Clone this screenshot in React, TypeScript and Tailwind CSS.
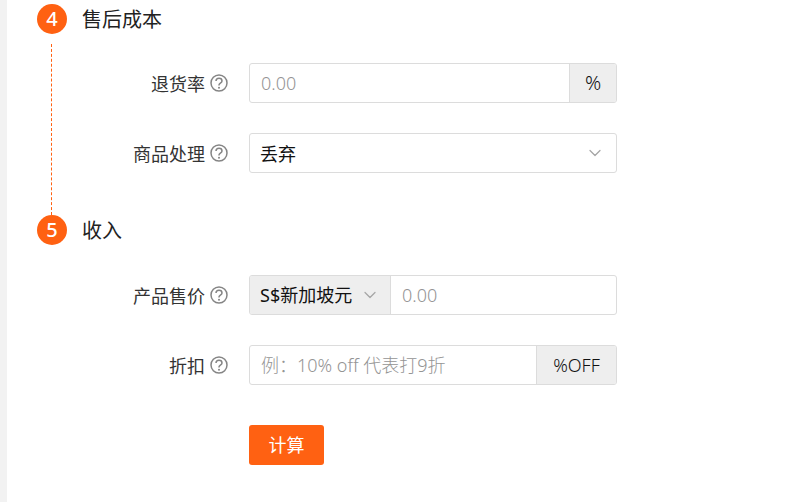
import { ChevronDown } from 'lucide-react'
import type { ReactNode } from 'react'

function HelpIcon() {
  return (
    <svg viewBox="0 0 18 18" className="h-[18px] w-[18px] shrink-0" fill="none">
      <circle cx="9" cy="9" r="8" stroke="#858585" strokeWidth="1.5" />
      <path
        d="M6 7.1c0-1.7 1.3-2.8 3-2.8s3 1 3 2.6c0 1.2-.8 1.8-1.6 2.3-.9.6-1.4 1-1.4 1.9v.4"
        stroke="#858585"
        strokeWidth="1.5"
      />
      <circle cx="9" cy="13.7" r="1" fill="#858585" />
    </svg>
  )
}

function Step({ num, title }: { num: number; title: string }) {
  return (
    <div className="flex h-[30px] items-center gap-[15px]">
      <span className="flex h-[30px] w-[30px] items-center justify-center rounded-full bg-[#ff6112] text-[20px] font-medium text-white">
        {num}
      </span>
      <span className="pt-[2px] text-[20px] leading-[30px] text-[#222]">{title}</span>
    </div>
  )
}

function Row({ label, children }: { label: string; children: ReactNode }) {
  return (
    <div className="flex h-10 items-center">
      <div className="flex w-[191px] items-center justify-end gap-[5px]">
        <span className="pt-[2px] text-[18px] text-[#333]">{label}</span>
        <HelpIcon />
      </div>
      <div className="ml-[21px] flex h-10 w-[368px] overflow-hidden rounded-[3px] border border-[#dcdcdc] text-[18px] text-[#111]">
        {children}
      </div>
    </div>
  )
}

function App() {
  return (
    <div className="flex h-[502px] w-[791px] overflow-hidden bg-white font-['Noto_Sans','Noto_Sans_CJK_SC',sans-serif]">
      <div className="w-[7px] bg-[#f2f2f2]" />
      <div className="flex-1 pl-[30px] pt-1">
        {/* 售后成本 */}
        <Step num={4} title="售后成本" />
        <div className="ml-[14px] mt-[10px] flex h-[171px] flex-col gap-[30px] border-l border-dashed border-[#ff6112] pt-[19px]">
          <div className="-ml-[15px]">
            <Row label="退货率">
              <span className="flex flex-1 items-center px-[11px] font-light text-[#949494]">0.00</span>
              <span className="flex w-[47px] items-center justify-center border-l border-[#dcdcdc] bg-[#eeeeee] text-[20px] font-light">%</span>
            </Row>
          </div>
          <div className="-ml-[15px]">
            <Row label="商品处理">
              <span className="flex flex-1 items-center justify-between pl-[10px] pr-[11px]">
                <span className="pt-[2px]">丢弃</span>
                <ChevronDown className="h-5 w-5 text-[#a6a6a6]" strokeWidth={1.5} />
              </span>
            </Row>
          </div>
        </div>
        {/* 收入 */}
        <Step num={5} title="收入" />
        <div className="mt-[30px] flex flex-col gap-[30px]">
          <Row label="产品售价">
            <span className="flex w-[141px] items-center justify-between whitespace-nowrap border-r border-[#dcdcdc] bg-[#eeeeee] pl-[10px] pr-[10px]">
              S$新加坡元
              <ChevronDown className="h-5 w-5 text-[#a6a6a6]" strokeWidth={1.5} />
            </span>
            <span className="flex flex-1 items-center px-[11px] font-light text-[#949494]">0.00</span>
          </Row>
          <Row label="折扣">
            <span className="flex flex-1 items-center whitespace-nowrap px-[11px] font-light text-[#949494]">例：10% off 代表打9折</span>
            <span className="flex w-[80px] items-center justify-center border-l border-[#dcdcdc] bg-[#eeeeee] font-light">%OFF</span>
          </Row>
          <div className="ml-[212px] mt-[10px]">
            <button className="h-10 w-[75px] rounded-[3px] bg-[#ff6112] text-[18px] text-white">计算</button>
          </div>
        </div>
      </div>
    </div>
  )
}

export default App
